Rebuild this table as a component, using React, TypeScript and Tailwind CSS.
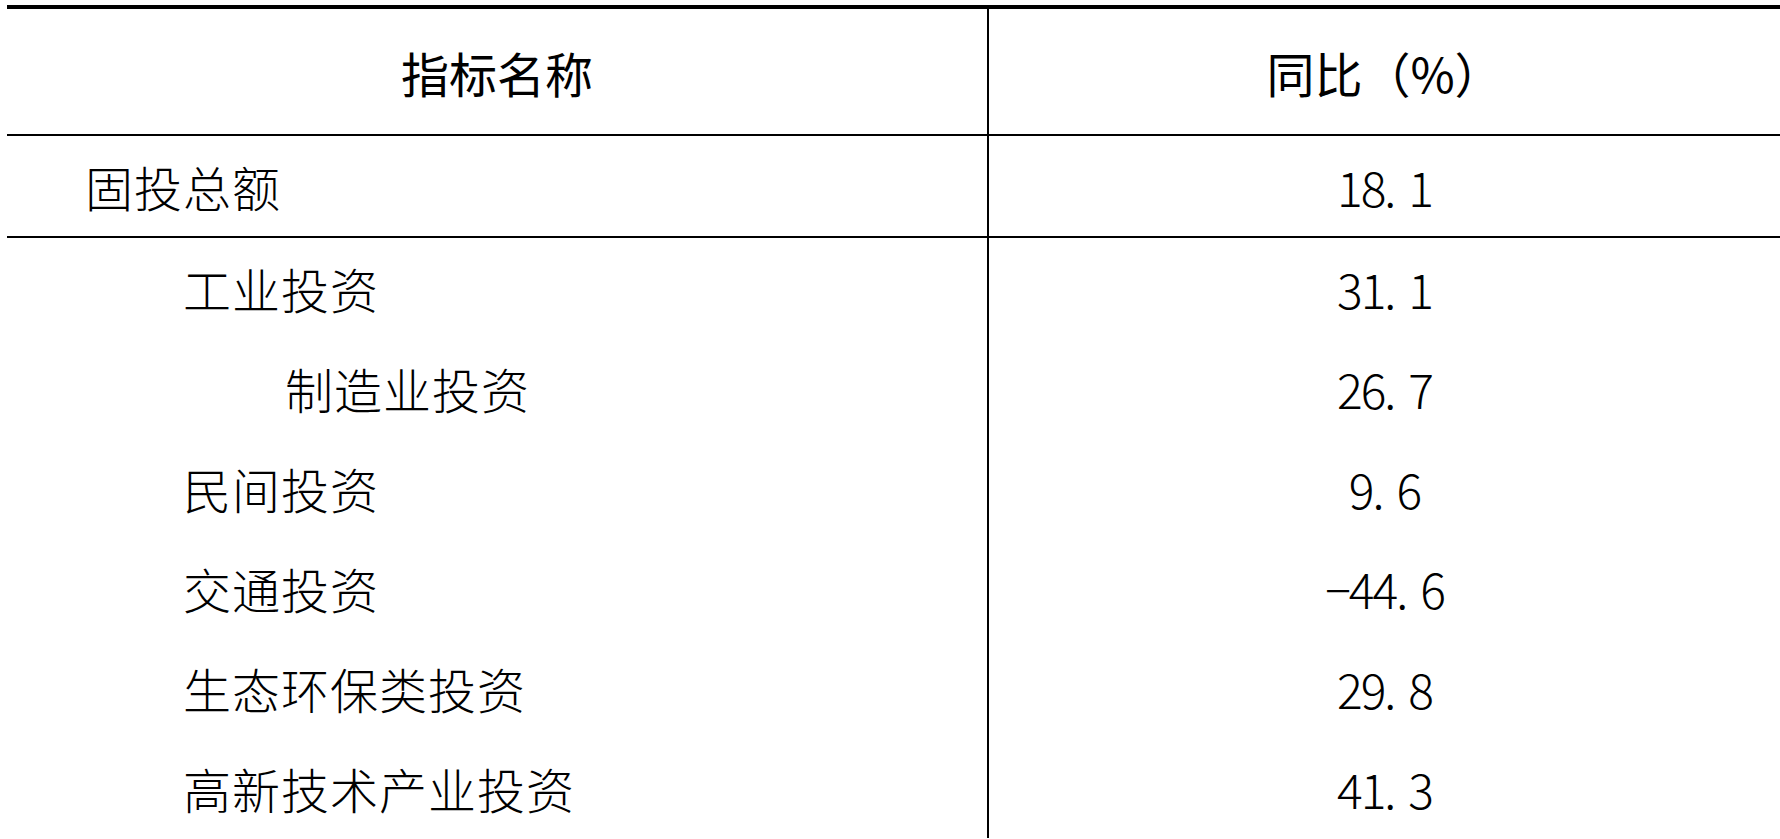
const rows: { name: string; level: 0 | 1 | 2; value: string; divider?: boolean }[] = [
  { name: "固投总额", level: 0, value: "18.1", divider: true },
  { name: "工业投资", level: 1, value: "31.1" },
  { name: "制造业投资", level: 2, value: "26.7" },
  { name: "民间投资", level: 1, value: "9.6" },
  { name: "交通投资", level: 1, value: "−44.6" },
  { name: "生态环保类投资", level: 1, value: "29.8" },
  { name: "高新技术产业投资", level: 1, value: "41.3" },
];

const indent = {
  0: "pl-[78px]",
  1: "pl-[176px]",
  2: "pl-[278px]",
};

function Num({ v }: { v: string }) {
  const [a, b] = v.split(".");
  return (
    <span className="tracking-[-2px]">
      {a}
      <span className="inline-block w-[24px]">.</span>
      {b}
    </span>
  );
}

export default function App() {
  return (
    <div className="min-h-screen bg-white pt-[5px] pl-[7px] text-black font-['Noto_Sans_CJK_SC',sans-serif]">
      <div className="w-[1773px] border-t-4 border-black">
        {/* header */}
        <div className="flex h-[127px] border-b-2 border-black">
          <div className="flex w-[982px] items-center justify-center border-r-2 border-black pt-[1px] text-[48px] leading-none font-normal">
            指标名称
          </div>
          <div className="flex flex-1 items-center justify-center pt-[1px] text-[48px] leading-none font-normal">
            同比（%）
          </div>
        </div>

        {rows.map((r) => (
          <div
            key={r.name}
            className={`flex ${r.divider ? "h-[102px] border-b-2 border-black" : "h-[100px]"}`}
          >
            <div
              className={`flex w-[982px] items-center border-r-2 border-black text-[48px] leading-none font-light tracking-[1px] ${indent[r.level]}`}
            >
              {r.name}
            </div>
            <div className="flex flex-1 items-center justify-center text-[48px] leading-none font-light">
              <Num v={r.value} />
            </div>
          </div>
        ))}
      </div>
    </div>
  );
}
